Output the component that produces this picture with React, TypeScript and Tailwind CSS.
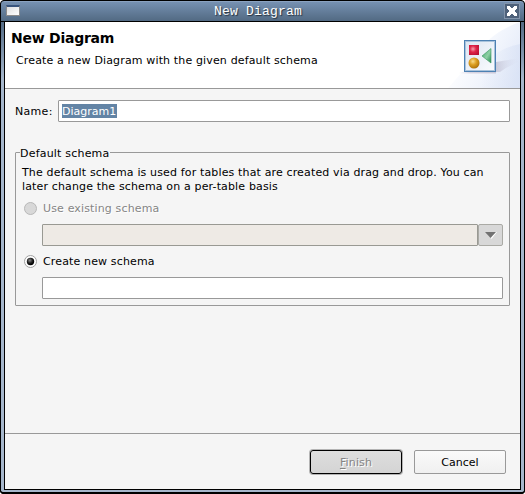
import React from "react";

function TitleBar() {
  return (
    <div className="relative flex h-[22px] items-start justify-between rounded-t-[4px] border border-black bg-linear-to-b from-[#7893b4] to-[#526a83] shadow-[inset_0_1px_0_#8aa2c0]">
      <div className="mt-[4px] ml-[5px] h-[11px] w-[14px] border border-t-[2px] border-[#8b8b8b] border-t-[#39547c] bg-linear-to-br from-[#dedede] to-white" />
      <div className="absolute top-[2px] left-[213px] whitespace-pre font-['Liberation_Mono','DejaVu_Sans_Mono',monospace] text-[13px] leading-[17px] tracking-[0.2px] text-white [text-shadow:1px_1px_1px_#26323f]">
        New Diagram
      </div>
      <svg className="mt-[2px] mr-[4px]" width="16" height="16" viewBox="0 0 16 16" shapeRendering="crispEdges">
        <rect x="0.5" y="0.5" width="15" height="15" fill="#4e617a" stroke="#8294ab" />
        <path d="M3 3h3v1h1v1h2V4h1V3h3v3h-1v1h-1v2h1v1h1v3h-3v-1H9v-1H7v1H6v1H3v-3h1V9h1V7H4V6H3z" fill="#fff" />
      </svg>
    </div>
  );
}

function BannerArt() {
  return (
    <svg width="75" height="66" viewBox="0 0 75 66">
      <defs>
        <linearGradient id="sweep" gradientUnits="userSpaceOnUse" x1="18" y1="20" x2="75" y2="50">
          <stop offset="0" stopColor="#fff" />
          <stop offset="0.55" stopColor="#f0f4fc" />
          <stop offset="1" stopColor="#e2e9f8" />
        </linearGradient>
        <linearGradient id="sweep2" x1="0" y1="0" x2="1" y2="0">
          <stop offset="0" stopColor="#e2e9f8" stopOpacity="0" />
          <stop offset="1" stopColor="#d5dff4" />
        </linearGradient>
        <linearGradient id="shade" x1="0" y1="0" x2="1" y2="0">
          <stop offset="0" stopColor="#b9b7ca" />
          <stop offset="1" stopColor="#dce2f4" stopOpacity="0" />
        </linearGradient>
        <linearGradient id="foot" x1="0" y1="0" x2="1" y2="0">
          <stop offset="0" stopColor="#e4dfe9" stopOpacity="0" />
          <stop offset="0.3" stopColor="#d9d5e2" />
          <stop offset="1" stopColor="#cbc9d9" />
        </linearGradient>
        <linearGradient id="panel" x1="0" y1="0" x2="1" y2="1">
          <stop offset="0" stopColor="#dce5f2" />
          <stop offset="1" stopColor="#fafbfe" />
        </linearGradient>
        <radialGradient id="red" cx="0.4" cy="0.4" r="0.7">
          <stop offset="0" stopColor="#f5a0ae" />
          <stop offset="0.45" stopColor="#df2448" />
          <stop offset="1" stopColor="#b90f32" />
        </radialGradient>
        <radialGradient id="gold" cx="0.4" cy="0.35" r="0.7">
          <stop offset="0" stopColor="#f9dc8c" />
          <stop offset="0.45" stopColor="#dda022" />
          <stop offset="1" stopColor="#a86d08" />
        </radialGradient>
        <linearGradient id="green" x1="0" y1="0" x2="1" y2="1">
          <stop offset="0" stopColor="#3aa565" />
          <stop offset="0.55" stopColor="#8ed0a5" />
          <stop offset="1" stopColor="#258b50" />
        </linearGradient>
      </defs>
      <path d="M75 0C55 7 38 20 26 38C18 50 10 58 3 66H75Z" fill="url(#sweep)" />
      <path d="M75 22C60 25 50 31 43 40L35 66H75Z" fill="url(#sweep2)" opacity="0.6" />
      <path d="M51 50L51 40L75 36V39L61 46L55 50Z" fill="url(#shade)" opacity="0.65" />
      <rect x="14" y="50" width="37" height="1.500" fill="url(#foot)" />
      <rect x="19.5" y="18.5" width="31" height="31" fill="url(#panel)" stroke="#4d81b3" />
      <rect x="20.5" y="19.5" width="29" height="29" fill="none" stroke="#a9c3dc" />
      <rect x="24" y="23" width="10" height="10" fill="url(#red)" />
      <circle cx="29" cy="41" r="5.5" fill="url(#gold)" />
      <path d="M46 26.500V41L37 34Z" fill="url(#green)" stroke="#399660" strokeWidth="0.6" />
    </svg>
  );
}

function Radio({ on }: { on?: boolean }) {
  return (
    <svg className="overflow-visible" width="14" height="14" viewBox="0 0 14 14">
      <defs>
        <radialGradient id="dot" cx="0.4" cy="0.35" r="0.6">
          <stop offset="0" stopColor="#8a8a8a" />
          <stop offset="0.6" stopColor="#222" />
          <stop offset="1" stopColor="#000" />
        </radialGradient>
      </defs>
      <circle cx="7.5" cy="7.5" r="6" fill={on ? "#fff" : "#d8d8d8"} stroke={on ? "#a2a2a2" : "#b8b8b8"} />
      {on && <circle cx="7.5" cy="7.5" r="3.7" fill="url(#dot)" />}
    </svg>
  );
}

export default function App() {
  return (
    <div className="h-[494px] w-[525px] overflow-hidden bg-white font-['DejaVu_Sans','Liberation_Sans',sans-serif] text-[11px] leading-[14px] tracking-[0.145px] text-black">
      <div className="flex h-full flex-col rounded-t-[5px] rounded-b-[4px] bg-black">
        <TitleBar />
        <div className="flex h-[472px] flex-col rounded-b-[4px] border-x border-b-2 border-black bg-linear-to-b from-[#536b85] via-[#a6b7cc] via-12% to-[#a6b7cc] px-[3px] pb-[2px]">
          <div className="flex min-h-0 flex-1 flex-col border-x border-b border-black bg-[#f5f5f5]">
            <header className="flex h-[67px] shrink-0 justify-between border-b border-[#999] bg-white">
              <div className="pt-[8px] pl-[6px]">
                <h1 className="text-[14px] leading-[16px] font-bold tracking-[-0.25px] whitespace-nowrap">New Diagram</h1>
                <p className="mt-[8px] ml-[5px] whitespace-nowrap">Create a new Diagram with the given default schema</p>
              </div>
              <BannerArt />
            </header>

            <main className="flex h-[344px] shrink-0 flex-col px-[10px] pt-[11px]">
              <label className="flex h-[22px] items-center">
                <span className="w-[43px] pt-[2px] tracking-[0.3px] whitespace-nowrap">Name:</span>
                <span className="flex h-[22px] flex-1 items-center rounded-[1px] border border-[#999] bg-white pl-[3px]">
                  <span className="h-[14px] w-[55px] bg-[#6384a5] leading-[15px] tracking-normal whitespace-nowrap text-white">Diagram1</span>
                </span>
              </label>

              <section className="mt-[30px] h-[154px] rounded-[1px] border border-[#999] pl-[6px]">
                <h2 className="-mt-[7px] -ml-[2px] h-[15px] w-[90px] bg-[#f5f5f5] leading-[15px] tracking-[0.2px] whitespace-nowrap">Default schema</h2>
                <p className="mt-[5px] whitespace-nowrap">
                  The default schema is used for tables that are created via drag and drop. You can
                  <br />
                  later change the schema on a per-table basis
                </p>
                <div className="mt-[7px] flex h-[14px] items-center gap-[6px] pl-[1px] whitespace-nowrap text-[#858585]">
                  <Radio />
                  <span className="pt-[2px] [text-shadow:1px_1px_0_#fff]">Use existing schema</span>
                </div>
                <div className="mt-[9px] ml-[20px] flex h-[22px] w-[461px]">
                  <div className="w-[436px] rounded-[1px] border border-[#999993] bg-[#eeeae5]" />
                  <div className="flex w-[25px] items-center justify-center rounded-[2px] border border-[#aaaaa5] bg-[#d8d8d8]">
                    <svg width="12" height="8" viewBox="0 0 12 8">
                      <path d="M1 1H12L6.500 8Z" fill="#fff" />
                      <path d="M0 1H11L5.500 7Z" fill="#727272" />
                    </svg>
                  </div>
                </div>
                <div className="mt-[8px] flex h-[14px] items-center gap-[6px] pl-[1px] whitespace-nowrap">
                  <Radio on />
                  <span className="pt-[2px]">Create new schema</span>
                </div>
                <div className="mt-[9px] ml-[20px] h-[22px] w-[461px] rounded-[1px] border border-[#999] bg-white" />
              </section>
            </main>

            <footer className="flex flex-1 justify-end gap-[12px] border-t border-[#999] pt-[16px] pr-[14px]">
              <button className="h-[24px] w-[92px] rounded-[3px] border border-black bg-linear-to-b from-[#dedede] to-[#d4d4d4] pt-[2px] text-[#858585] shadow-[0_0_0_1px_#b4b4b4] [text-shadow:1px_1px_0_#fff]">
                <span className="underline underline-offset-2">F</span>inish
              </button>
              <button className="h-[24px] w-[92px] rounded-[2px] border border-[#999] bg-linear-to-b from-[#fafafa] to-[#f0f0f0] pt-[2px] tracking-normal">
                Cancel
              </button>
            </footer>
          </div>
        </div>
      </div>
    </div>
  );
}
